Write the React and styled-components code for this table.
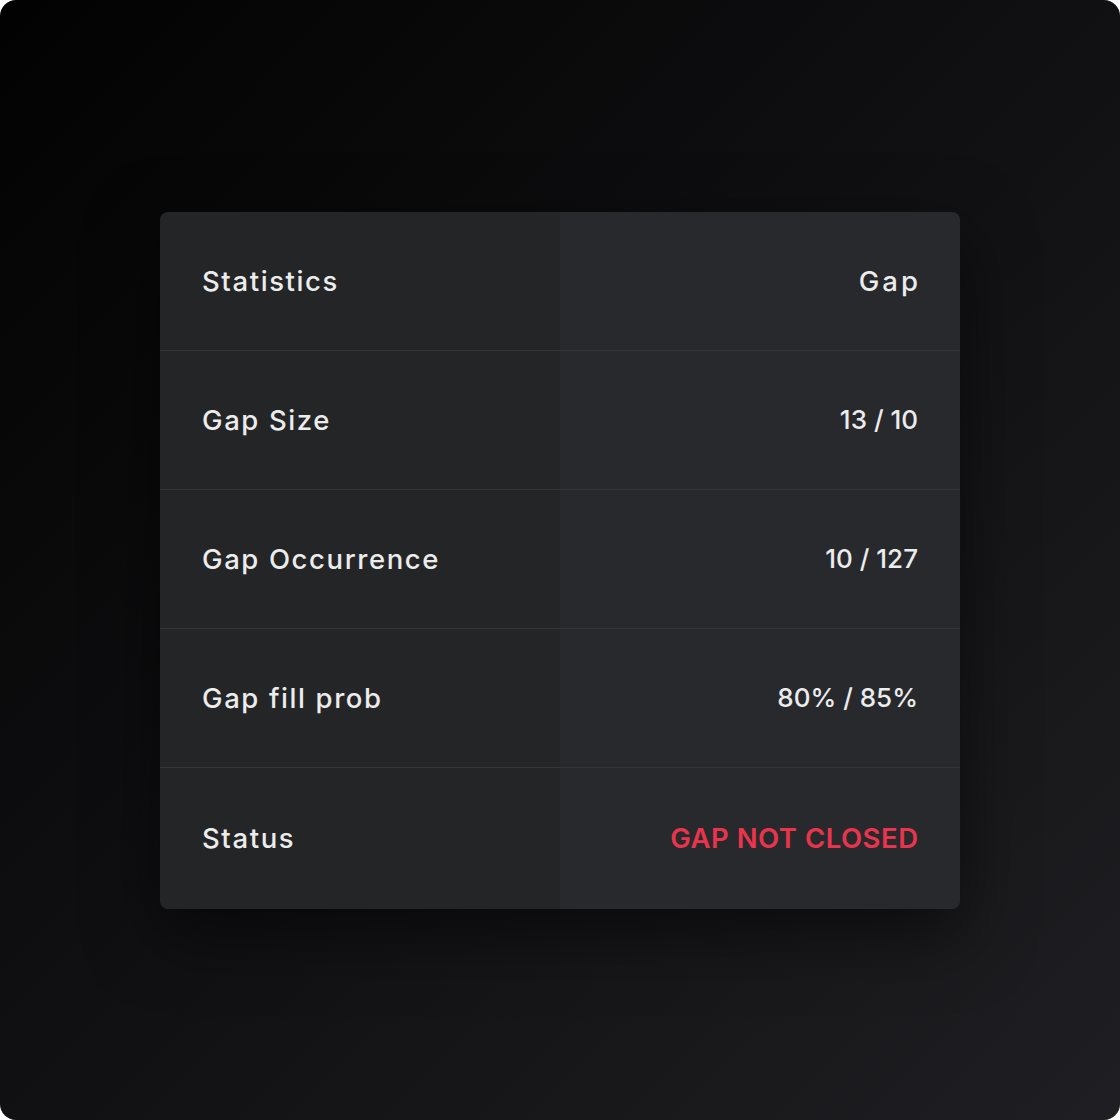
import React from "react";
import styled, { createGlobalStyle, css } from "styled-components";

const Global = createGlobalStyle`
  html, body { margin: 0; padding: 0; background: #ffffff; }
  body { font-family: Inter, "Open Sans", sans-serif; }
`;

const Frame = styled.div`
  width: 1120px;
  height: 1120px;
  border-radius: 16px;
  background: linear-gradient(135deg, #020202 0%, #0f0f11 45%, #1f1f23 100%);
  display: flex;
  align-items: center;
  justify-content: center;
  overflow: hidden;
`;

const Card = styled.div`
  width: 800px;
  border-radius: 8px;
  background: linear-gradient(90deg, #242527 0%, #242527 50%, #28292c 50%, #28292c 100%);
  box-shadow: 0 24px 70px rgba(0, 0, 0, 0.55);
  display: flex;
  flex-direction: column;
  overflow: hidden;
`;

const Row = styled.div`
  height: 139px;
  box-sizing: border-box;
  padding: 0 42px;
  display: flex;
  align-items: center;
  justify-content: space-between;
  border-bottom: 1px solid #343539;
  &:last-child { border-bottom: none; height: 141px; }
`;

const Label = styled.span`
  font-family: Inter, "Open Sans", sans-serif;
  font-size: 27.5px;
  font-weight: 500;
  color: #ececec;
  letter-spacing: 1.6px;
`;

const Value = styled.span`
  font-family: Inter, "Open Sans", sans-serif;
  font-weight: 500;
  color: #ececec;
  ${(p) =>
    p.$kind === "text" &&
    css`
      font-size: 27.5px;
      letter-spacing: 3px;
      margin-right: -3px;
    `}
  ${(p) =>
    p.$kind === "num" &&
    css`
      font-size: 26px;
      letter-spacing: 0;
    `}
  ${(p) =>
    p.$kind === "alert" &&
    css`
      font-size: 27.5px;
      font-weight: 600;
      letter-spacing: 0.5px;
      margin-right: -0.5px;
      color: #e8354d;
    `}
`;

const rows = [
  ["Statistics", "Gap", "text"],
  ["Gap Size", "13 / 10", "num"],
  ["Gap Occurrence", "10 / 127", "num"],
  ["Gap fill prob", "80% / 85%", "num"],
  ["Status", "GAP NOT CLOSED", "alert"],
];

export default function App() {
  return (
    <>
      <Global />
      <Frame>
        <Card>
          {rows.map(([l, v, kind]) => (
            <Row key={l}>
              <Label>{l}</Label>
              <Value $kind={kind}>{v}</Value>
            </Row>
          ))}
        </Card>
      </Frame>
    </>
  );
}
